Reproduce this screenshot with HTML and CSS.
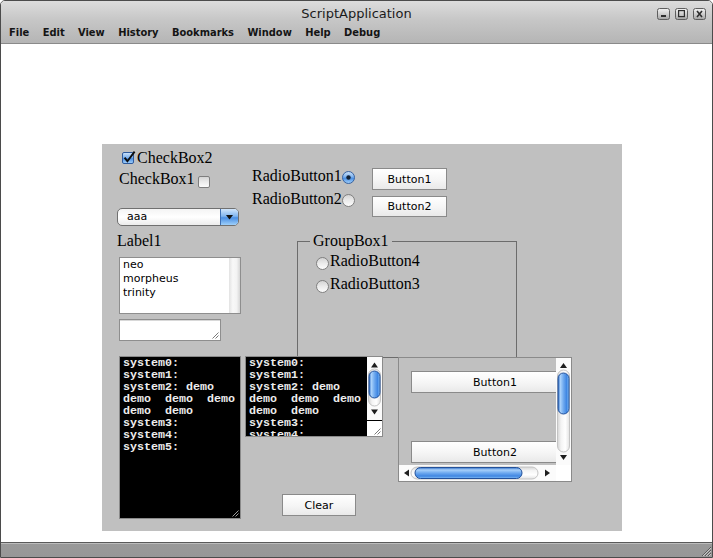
FILE: index.html
```html
<!DOCTYPE html>
<html lang="en">
<head>
<meta charset="utf-8">
<title>ScriptApplication</title>
<link rel="stylesheet" href="styles.css">
</head>
<body>
<svg class="defs" width="0" height="0" aria-hidden="true">
  <defs>
    <linearGradient id="gWin" x1="0" y1="0" x2="0" y2="1">
      <stop offset="0" stop-color="#f2f2f2"/><stop offset="0.5" stop-color="#cfcfcf"/><stop offset="1" stop-color="#a3a3a3"/>
    </linearGradient>
    <linearGradient id="gBlue" x1="0" y1="0" x2="0" y2="1">
      <stop offset="0" stop-color="#cfe4fb"/><stop offset="0.45" stop-color="#7fb3ef"/><stop offset="0.55" stop-color="#4a8fe4"/><stop offset="1" stop-color="#a6d3fb"/>
    </linearGradient>
    <linearGradient id="gBox" x1="0" y1="0" x2="0" y2="1">
      <stop offset="0" stop-color="#d2d2d2"/><stop offset="0.5" stop-color="#ebebeb"/><stop offset="1" stop-color="#fdfdfd"/>
    </linearGradient>
    <linearGradient id="gThumbV" x1="0" y1="0" x2="1" y2="0">
      <stop offset="0" stop-color="#2e6bc4"/><stop offset="0.22" stop-color="#a9d1fa"/><stop offset="0.5" stop-color="#6ea9ef"/><stop offset="0.78" stop-color="#3f86e2"/><stop offset="1" stop-color="#86c0f6"/>
    </linearGradient>
    <linearGradient id="gThumbH" x1="0" y1="0" x2="0" y2="1">
      <stop offset="0" stop-color="#2e6bc4"/><stop offset="0.22" stop-color="#a9d1fa"/><stop offset="0.5" stop-color="#6ea9ef"/><stop offset="0.78" stop-color="#3f86e2"/><stop offset="1" stop-color="#86c0f6"/>
    </linearGradient>
    <linearGradient id="gTrackV" x1="0" y1="0" x2="1" y2="0">
      <stop offset="0" stop-color="#d4d4d4"/><stop offset="0.3" stop-color="#f4f4f4"/><stop offset="0.65" stop-color="#ffffff"/><stop offset="1" stop-color="#e2e2e2"/>
    </linearGradient>
    <linearGradient id="gTrackH" x1="0" y1="0" x2="0" y2="1">
      <stop offset="0" stop-color="#d4d4d4"/><stop offset="0.3" stop-color="#f4f4f4"/><stop offset="0.65" stop-color="#ffffff"/><stop offset="1" stop-color="#e2e2e2"/>
    </linearGradient>
  </defs>
</svg>
<div class="window">
  <div class="chrome">
    <header class="titlebar">
      <div class="title">ScriptApplication</div>
      <div class="winbtns">
        <svg class="wb" width="13" height="12" viewBox="0 0 13 12"><rect x="0.5" y="0.5" width="12" height="11" rx="2" fill="url(#gWin)" stroke="#5e5e5e"/><rect x="4" y="7" width="5" height="2" fill="#2e2e2e"/></svg>
        <svg class="wb" width="13" height="12" viewBox="0 0 13 12"><rect x="0.5" y="0.5" width="12" height="11" rx="2" fill="url(#gWin)" stroke="#5e5e5e"/><rect x="3.6" y="2.6" width="5.8" height="6" fill="none" stroke="#2e2e2e" stroke-width="1.2"/></svg>
        <svg class="wb" width="13" height="12" viewBox="0 0 13 12"><rect x="0.5" y="0.5" width="12" height="11" rx="2" fill="url(#gWin)" stroke="#5e5e5e"/><path d="M4 3L9 9M9 3L4 9" stroke="#2e2e2e" stroke-width="1.6"/></svg>
      </div>
    </header>
    <nav class="menubar">
      <span>File</span><span>Edit</span><span>View</span><span>History</span><span>Bookmarks</span><span>Window</span><span>Help</span><span>Debug</span>
    </nav>
  </div>

  <main class="content">
    <div class="form">
      <label class="w check cb2">
        <svg class="cbox" width="14" height="13" viewBox="0 0 14 13"><rect x="0.5" y="1.5" width="11" height="11" rx="1.5" fill="url(#gBlue)" stroke="#2f5a9c"/><path d="M2.6 6.6L5.4 10.2L12.6 0.6" fill="none" stroke="#0d0d0d" stroke-width="1.9"/></svg>
        <span class="lbl">CheckBox2</span>
      </label>

      <label class="w check cb1">
        <span class="lbl">CheckBox1</span>
        <svg class="cbox" width="12" height="12" viewBox="0 0 12 12"><rect x="0.5" y="0.5" width="11" height="11" rx="1.5" fill="url(#gBox)" stroke="#7e7e7e"/></svg>
      </label>

      <label class="w check rb1">
        <span class="lbl">RadioButton1</span>
        <svg class="radio" width="13" height="13" viewBox="0 0 13 13"><circle cx="6.5" cy="6.5" r="6" fill="url(#gBlue)" stroke="#39629f"/><circle cx="6.5" cy="6.5" r="2.2" fill="#132236"/></svg>
      </label>

      <label class="w check rb2">
        <span class="lbl">RadioButton2</span>
        <svg class="radio" width="13" height="13" viewBox="0 0 13 13"><circle cx="6.5" cy="6.5" r="6" fill="url(#gBox)" stroke="#7e7e7e"/></svg>
      </label>

      <button class="w btn b1">Button1</button>
      <button class="w btn b2">Button2</button>

      <div class="w combo">
        <span class="combo-text">aaa</span>
        <span class="combo-arrow"><svg width="7" height="5" viewBox="0 0 7 5"><path d="M0 0H7L3.5 4.5Z" fill="#111"/></svg></span>
      </div>

      <span class="w lbl label1">Label1</span>

      <div class="w list">
        <ul class="items">
          <li>neo</li>
          <li>morpheus</li>
          <li>trinity</li>
        </ul>
        <div class="list-track"></div>
      </div>

      <div class="w tf">
        <svg class="grip" width="9" height="9" viewBox="0 0 9 9"><path d="M8.5 2.5L2.5 8.5M8.5 5.5L5.5 8.5" stroke="#7a7a7a" stroke-width="1"/></svg>
      </div>

      <div class="w group">
        <span class="gtitle lbl">GroupBox1</span>
        <label class="check rb4">
          <svg class="radio" width="13" height="13" viewBox="0 0 13 13"><circle cx="6.5" cy="6.5" r="6" fill="url(#gBox)" stroke="#7e7e7e"/></svg>
          <span class="lbl">RadioButton4</span>
        </label>
        <label class="check rb3">
          <svg class="radio" width="13" height="13" viewBox="0 0 13 13"><circle cx="6.5" cy="6.5" r="6" fill="url(#gBox)" stroke="#7e7e7e"/></svg>
          <span class="lbl">RadioButton3</span>
        </label>
      </div>

      <div class="w term term1">
<pre class="term-text">system0:
system1:
system2: demo
demo  demo  demo
demo  demo
system3:
system4:
system5:</pre>
        <svg class="grip" width="9" height="9" viewBox="0 0 9 9"><path d="M8.5 2.5L2.5 8.5M8.5 5.5L5.5 8.5" stroke="#9c9c9c" stroke-width="1"/></svg>
      </div>

      <div class="w term term2">
<pre class="term-text">system0:
system1:
system2: demo
demo  demo  demo
demo  demo
system3:
system4:
system5:</pre>
        <svg class="vbar" width="15" height="63" viewBox="0 0 15 63">
          <rect x="0" y="0" width="15" height="63" fill="#fbfbfb"/>
          <path d="M7.5 5.5L4 10.5H11Z" fill="#1e1e1e"/>
          <rect x="1.5" y="12" width="12" height="37" rx="6" fill="url(#gTrackV)" stroke="#c4c4c4"/>
          <rect x="2" y="14" width="11" height="27" rx="5.5" fill="url(#gThumbV)" stroke="#23519a"/>
          <path d="M4 52.5H11L7.5 57.5Z" fill="#1e1e1e"/>
        </svg>
        <div class="corner">
          <svg class="grip" width="9" height="9" viewBox="0 0 9 9"><path d="M8.5 2.5L2.5 8.5M8.5 5.5L5.5 8.5" stroke="#7a7a7a" stroke-width="1"/></svg>
        </div>
      </div>

      <div class="w spane">
        <div class="viewport">
          <button class="btn vbtn">Button1</button>
          <button class="btn vbtn">Button2</button>
        </div>
        <svg class="vbar" width="15" height="107" viewBox="0 0 15 107">
          <rect x="0" y="0" width="15" height="107" fill="#fbfbfb"/>
          <path d="M7.5 5L4 10H11Z" fill="#1e1e1e"/>
          <rect x="1.5" y="12" width="12" height="82" rx="6" fill="url(#gTrackV)" stroke="#c4c4c4"/>
          <rect x="2" y="15" width="11" height="41" rx="5.5" fill="url(#gThumbV)" stroke="#23519a"/>
          <path d="M4 97H11L7.5 102Z" fill="#1e1e1e"/>
        </svg>
        <svg class="hbar" width="157" height="16" viewBox="0 0 157 16">
          <rect x="0" y="0" width="157" height="16" fill="#fbfbfb"/>
          <path d="M5 8L10 4.5V11.5Z" fill="#1e1e1e"/>
          <rect x="12" y="2" width="127" height="12" rx="6" fill="url(#gTrackH)" stroke="#c4c4c4"/>
          <rect x="16" y="2.5" width="107" height="11" rx="5.5" fill="url(#gThumbH)" stroke="#23519a"/>
          <path d="M146 4.5V11.5L151 8Z" fill="#1e1e1e"/>
        </svg>
        <div class="pcorner"></div>
      </div>

      <button class="w btn clear">Clear</button>
    </div>
  </main>

  <footer class="statusbar">
    <svg class="sgrip" width="13" height="13" viewBox="0 0 13 13"><path d="M12 3L3 12M12 6L6 12M12 9L9 12" stroke="#5a5a5a" stroke-width="1"/><path d="M12 4L4 12M12 7L7 12M12 10L10 12" stroke="#c8c8c8" stroke-width="1"/></svg>
  </footer>
</div>
</body>
</html>
```

FILE: styles.css
```css
* { box-sizing: border-box; }
html, body { margin: 0; padding: 0; background: #ffffff; }
body { width: 713px; height: 558px; overflow: hidden; font-family: "DejaVu Sans", "Liberation Sans", sans-serif; }

.defs { display: block; width: 0; height: 0; overflow: hidden; }

.window {
  width: 713px;
  height: 558px;
  display: flex;
  flex-direction: column;
  border: 1px solid #4b4b4b;
  border-radius: 5px 5px 0 0;
  overflow: hidden;
  background: #ffffff;
}

.chrome { background: linear-gradient(#dcdcdc, #c6c6c6 45%, #b4b4b4); }

.titlebar {
  height: 22px;
  display: grid;
  grid-template-columns: 1fr auto 1fr;
}
.title {
  grid-column: 2;
  padding-top: 3px;
  font-size: 13px;
  line-height: 19px;
  color: #1b1b1b;
  white-space: nowrap;
}
.winbtns {
  grid-column: 3;
  justify-self: end;
  display: flex;
  gap: 5px;
  padding: 7px 6px 0 0;
}
.wb { display: block; }

.menubar {
  height: 21px;
  display: flex;
  gap: 13.4px;
  padding-left: 8px;
  border-bottom: 1px solid #8a8a8a;
  font-family: "DejaVu Sans Condensed", "DejaVu Sans", sans-serif;
  font-stretch: condensed;
  font-weight: bold;
  font-size: 11px;
  line-height: 20px;
  color: #141414;
}

.content { flex: 1; background: #ffffff; }

.form {
  position: relative;
  margin: 100px 0 0 101px;
  width: 520px;
  height: 387px;
  background: #c0c0c0;
}

/* widgets placed on the form canvas (null layout) */
.w { position: absolute; }

.lbl {
  font-family: "Liberation Serif", "Times New Roman", serif;
  font-size: 16px;
  line-height: 18px;
  color: #000;
  white-space: nowrap;
}

.check { display: flex; align-items: flex-start; }
.check svg { display: block; flex: none; }

.cb2 { left: 20px; top: 5px; }
.cb2 .cbox { margin-top: 2px; margin-right: 1px; }

.cb1 { left: 17px; top: 26px; }
.cb1 .cbox { margin-top: 6px; margin-left: 3px; }

.rb1 { left: 150px; top: 23px; }
.rb2 { left: 150px; top: 46px; }
.rb1 .radio, .rb2 .radio { margin-top: 4px; }

.btn {
  margin: 0;
  padding: 0;
  border: 1px solid #8a8a8a;
  border-radius: 0;
  background: linear-gradient(#ffffff, #f5f5f5 55%, #e9e9e9);
  font-family: "DejaVu Sans", sans-serif;
  font-size: 11px;
  color: #000;
  text-align: center;
}
.b1 { left: 270px; top: 24px; width: 75px; height: 22px; }
.b2 { left: 270px; top: 52px; width: 75px; height: 21px; }
.clear { left: 180px; top: 350px; width: 74px; height: 22px; }

.combo {
  left: 15px;
  top: 64px;
  width: 122px;
  height: 18px;
  display: flex;
  border: 1px solid #707070;
  border-radius: 5px;
  overflow: hidden;
  background: linear-gradient(#f4f4f4, #ffffff 50%, #ececec);
}
.combo-text {
  flex: 1;
  padding-left: 9px;
  font-size: 11px;
  line-height: 16px;
  color: #000;
}
.combo-arrow {
  width: 18px;
  display: flex;
  align-items: center;
  justify-content: center;
  border-left: 1px solid #3f70b3;
  background: linear-gradient(#d2e6fb, #80b5f0 45%, #4a8fe4 55%, #9fd0fa);
}
.combo-arrow svg { display: block; }

.label1 { left: 15px; top: 88px; }

.list {
  left: 17px;
  top: 113px;
  width: 122px;
  height: 57px;
  display: grid;
  grid-template-columns: 1fr 11px;
  border: 1px solid #8e8e8e;
  background: #ffffff;
}
.items {
  margin: 0;
  padding: 0 3px;
  list-style: none;
  font-size: 11px;
  line-height: 14px;
  color: #000;
}
.list-track {
  background: linear-gradient(to right, #e2e2e2, #f8f8f8 35%, #f3f3f3 70%, #d6d6d6);
}

.tf {
  left: 17px;
  top: 175px;
  width: 102px;
  height: 22px;
  border: 1px solid #8e8e8e;
  background: #ffffff;
  box-shadow: inset 0 1px 0 #d8d8d8;
}
.grip { position: absolute; right: 1px; bottom: 1px; display: block; }

.group {
  left: 195px;
  top: 97px;
  width: 220px;
  height: 117px;
  border: 1px solid #6c6c6c;
}
.gtitle {
  position: absolute;
  left: 12px;
  top: -10px;
  padding: 0 3px;
  background: #c0c0c0;
}
.group .check { position: absolute; left: 18px; }
.rb4 { top: 10px; }
.rb3 { top: 33px; }
.group .radio { margin-top: 5px; margin-right: 1px; }

.term {
  border: 1px solid #8a8a8a;
  background: #000000;
  overflow: hidden;
}
.term-text {
  margin: 0;
  padding: 0 3px;
  font-family: "Liberation Mono", "Courier New", monospace;
  font-weight: bold;
  font-size: 11.67px;
  line-height: 12px;
  color: #ededed;
  white-space: pre;
  overflow: hidden;
}
.term1 { left: 17px; top: 212px; width: 122px; height: 163px; }
.term2 {
  left: 143px;
  top: 212px;
  width: 138px;
  height: 81px;
  display: grid;
  grid-template-columns: 1fr 15px;
  grid-template-rows: 1fr 15px;
}
.term2 .term-text { grid-column: 1; grid-row: 1 / 3; min-width: 0; }
.term2 .vbar { grid-column: 2; grid-row: 1; display: block; }
.corner { grid-column: 2; grid-row: 2; position: relative; background: #ffffff; }

.spane {
  left: 296px;
  top: 213px;
  width: 174px;
  height: 125px;
  display: grid;
  grid-template-columns: 1fr 15px;
  grid-template-rows: 1fr 16px;
  border: 1px solid #8a8a8a;
  background: #c0c0c0;
}
.viewport {
  grid-column: 1;
  grid-row: 1;
  min-width: 0;
  overflow: hidden;
  padding: 13px 0 0 12px;
}
.vbtn { display: block; width: 168px; height: 22px; }
.vbtn + .vbtn { margin-top: 48px; }
.spane .vbar { grid-column: 2; grid-row: 1; display: block; }
.spane .hbar { grid-column: 1; grid-row: 2; display: block; }
.pcorner { grid-column: 2; grid-row: 2; background: #ffffff; }

.statusbar {
  height: 15px;
  display: flex;
  justify-content: flex-end;
  align-items: flex-end;
  border-top: 1px solid #5a5a5a;
  background: linear-gradient(#bcbcbc 0, #bcbcbc 1px, #999999 1px, #979797);
}
.sgrip { display: block; }
```
